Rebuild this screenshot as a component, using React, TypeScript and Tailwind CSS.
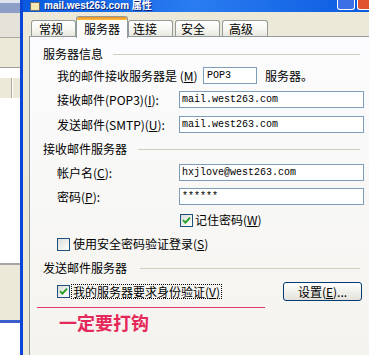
import type { ReactNode } from "react";

const cjk = "font-['Noto_Sans_CJK_SC','Noto_Sans',sans-serif]";
const mono = "font-['Liberation_Mono','DejaVu_Sans_Mono',monospace]";

function Box({ checked }: { checked?: boolean }) {
  return (
    <span className="flex h-[13px] w-[13px] shrink-0 items-center justify-center border border-[#1c5180] bg-gradient-to-br from-[#dcdcd7] to-white">
      {checked && (
        <svg width="9" height="9" viewBox="0 0 9 9">
          <path d="M1 4.2 L3.4 6.6 L8 1.6" stroke="#21a121" strokeWidth="1.8" fill="none" />
        </svg>
      )}
    </span>
  );
}

function Field({ value, className }: { value: string; className: string }) {
  return (
    <div
      className={`flex h-[17px] items-center border border-[#7f9db9] bg-white pl-[2px] text-[10px] leading-none text-black ${mono} ${className}`}
    >
      {value}
    </div>
  );
}

function Header({ label, gap }: { label: string; gap: string }) {
  return (
    <div className="flex h-[14px] w-[317px] items-center">
      <span className="text-[12px] leading-[14px]">{label}</span>
      <div className={`h-px flex-1 bg-[#d0d0bf] ${gap}`} />
    </div>
  );
}

function Row({ label, children, mt }: { label: ReactNode; children: ReactNode; mt: string }) {
  return (
    <div className={`ml-[14px] flex h-[17px] items-center ${mt}`}>
      <span className="w-[122px] text-[12px] leading-[14px]">{label}</span>
      {children}
    </div>
  );
}

function Tab({ label, className }: { label: string; className: string }) {
  return (
    <div
      className={`flex h-[17px] items-center rounded-t-[3px] border border-b-0 border-[#919b9c] bg-gradient-to-b from-white via-[#f7f7f3] to-[#e6e5dc] text-[12px] leading-none ${className}`}
    >
      {label}
    </div>
  );
}

export default function App() {
  return (
    <div className={`flex h-[355px] w-[369px] overflow-hidden bg-white text-black ${cjk}`}>
      {/* background window strip */}
      <div className="flex w-[20px] shrink-0 flex-col">
        <div className="h-[3px] bg-[#dfe3ec]" />
        <div className="h-[10px] bg-[#8e9fc7]" />
        <div className="h-[24px] bg-[#e4e2d9]" />
        <div className="h-px bg-[#a9a8a2]" />
        <div className="h-[29px] bg-[#ece9d8]" />
        <div className="h-px bg-[#9d9d9a]" />
        <div className="h-[10px] bg-white" />
        <div className="flex h-[20px] bg-[#ece9d8]">
          <div className="ml-[11px] w-px bg-[#aca899]" />
          <div className="w-px bg-white" />
        </div>
        <div className="h-[165px] bg-white" />
        <div className="h-[2px] bg-[#a6a6a6]" />
        <div className="h-[55px] bg-[#ece9d8]" />
        <div className="h-[3px] bg-[#3a5fcd]" />
        <div className="flex-1 bg-white" />
      </div>
      <div className="w-[3px] shrink-0 bg-[#0c45d6]" />

      {/* dialog */}
      <div className="flex flex-1 flex-col bg-[#ece9d8]">
        <div className="flex h-[12px] items-center bg-gradient-to-r from-[#0a5ae0] via-[#2a7cf0] to-[#0a5ae0]">
          <div className="ml-[7px] h-[9px] w-[10px] border border-[#6b6b6b] bg-[#f4e7b0]" />
          <span className="ml-[4px] text-[10px] font-bold leading-[12px] text-white [text-shadow:1px_1px_#0a1f70] font-['Liberation_Sans','Noto_Sans_CJK_SC',sans-serif]">
            mail.west263.com 属性
          </span>
          <div className="mb-[2px] ml-auto h-[10px] w-[18px] self-end rounded-b-[3px] border border-t-0 border-white bg-[#3b6fe6]" />
          <div className="mb-[2px] ml-[2px] h-[10px] w-[12px] self-end rounded-bl-[3px] border border-t-0 border-r-0 border-white bg-[#e0512e]" />
        </div>

        <div className="flex flex-1 flex-col pl-[6px]">
          {/* tabs */}
          <div className="mt-[4px] flex h-[21px] items-end pl-[2px]">
            <Tab label="常规" className="w-[45px] pl-[7px]" />
            <div className="relative z-10 -mb-px flex h-[22px] w-[52px] flex-col rounded-t-[3px] border border-b-0 border-[#919b9c] bg-[#fcfcfe]">
              <div className="h-[3px] rounded-t-[2px] bg-gradient-to-b from-[#e68b2c] to-[#ffc73c]" />
              <div className="flex flex-1 items-center justify-center text-[12px] leading-none">服务器</div>
            </div>
            <Tab label="连接" className="w-[45px] pl-[4px]" />
            <Tab label="安全" className="ml-[2px] w-[45px] pl-[5px]" />
            <Tab label="高级" className="ml-[2px] w-[46px] pl-[6px]" />
          </div>

          {/* panel */}
          <div className="-mt-px flex flex-1 flex-col border-l border-t border-[#919b9c] bg-gradient-to-b from-[#fcfcfe] to-[#f4f3ee] pl-[13px]">
            <div className="mt-[10px]">
              <Header label="服务器信息" gap="ml-[10px]" />
            </div>

            <div className="ml-[14px] mt-[6px] flex h-[17px] items-center">
              <span className="w-[146px] text-[12px] leading-[14px]">
                我的邮件接收服务器是 (<u>M</u>)
              </span>
              <Field value="POP3" className="w-[54px] pl-[3px]" />
              <span className="ml-[8px] text-[12px] leading-[14px]">服务器。</span>
            </div>

            <Row label={<>接收邮件(POP3)(<u>I</u>):</>} mt="mt-[7px]">
              <Field value="mail.west263.com" className="w-[185px]" />
            </Row>
            <Row label={<>发送邮件(SMTP)(<u>U</u>):</>} mt="mt-[8px]">
              <Field value="mail.west263.com" className="w-[185px]" />
            </Row>

            <div className="mt-[9px]">
              <Header label="接收邮件服务器" gap="ml-[11px]" />
            </div>

            <Row label={<>帐户名(<u>C</u>):</>} mt="mt-[8px]">
              <Field value="hxjlove@west263.com" className="w-[185px]" />
            </Row>
            <Row label={<>密码(<u>P</u>):</>} mt="mt-[7px]">
              <Field value="******" className="w-[185px]" />
            </Row>

            <div className="ml-[137px] mt-[8px] flex h-[14px] items-center">
              <Box checked />
              <span className="ml-[2px] text-[12px] leading-[14px]">
                记住密码(<u>W</u>)
              </span>
            </div>

            <div className="ml-[14px] mt-[10px] flex h-[14px] items-center">
              <Box />
              <span className="ml-[3px] text-[12px] leading-[14px]">
                使用安全密码验证登录(<u>S</u>)
              </span>
            </div>

            <div className="mt-[10px]">
              <Header label="发送邮件服务器" gap="ml-[13px]" />
            </div>

            <div className="ml-[14px] mt-[7px] flex h-[19px] w-[305px] items-center justify-between">
              <div className="flex items-center">
                <Box checked />
                <span className="ml-px border border-dotted border-black px-[1px] text-[12px] leading-[13px]">
                  我的服务器要求身份验证(<u>V</u>)
                </span>
              </div>
              <div className="flex h-[19px] w-[79px] items-center justify-center rounded-[3px] border border-[#003c74] bg-gradient-to-b from-white to-[#e3e2da] text-[12px] leading-none">
                设置(<u>E</u>)...
              </div>
            </div>

            <div className="-ml-[6px] mt-[6px] h-px w-[228px] bg-[#e23a6c]" />
            <div className="ml-[16px] mt-[3px] h-[22px] text-[18px] font-bold leading-[22px] text-[#e5285a]">
              一定要打钩
            </div>
          </div>
        </div>
      </div>
    </div>
  );
}
